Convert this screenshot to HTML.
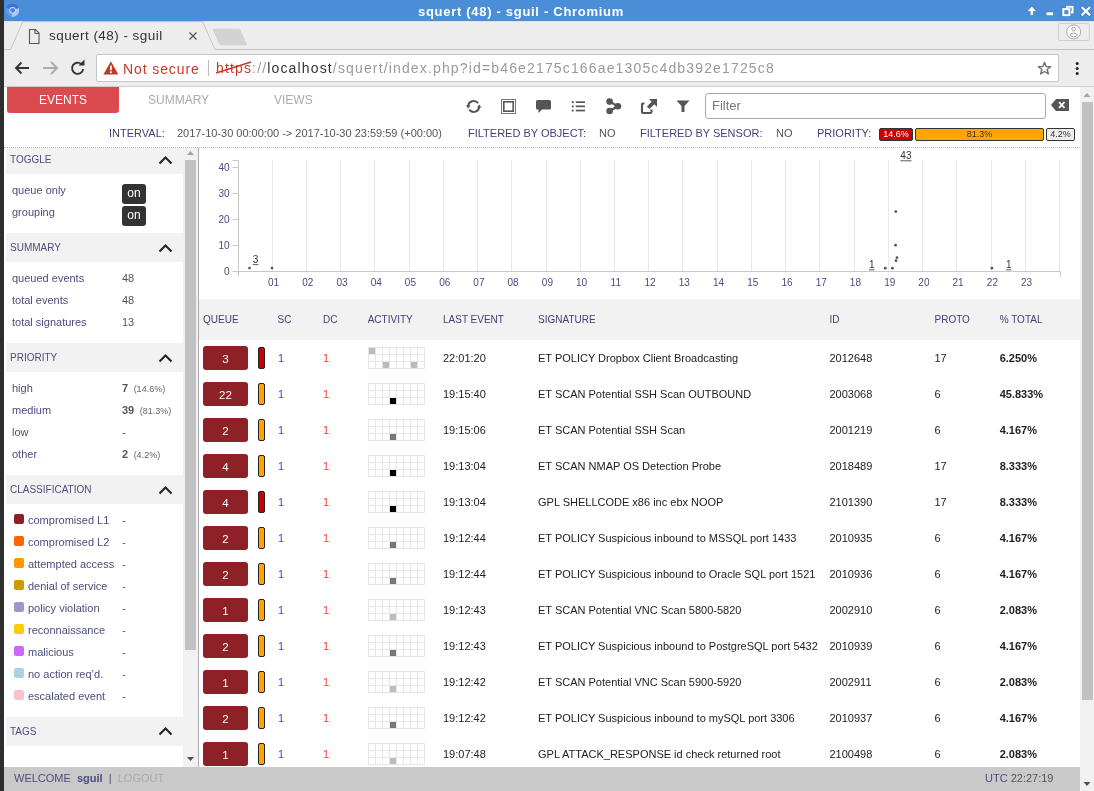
<!DOCTYPE html>
<html><head><meta charset="utf-8">
<style>
*{box-sizing:border-box;margin:0;padding:0}
html,body{width:1094px;height:791px;overflow:hidden;background:#fff;font-family:"Liberation Sans",sans-serif;position:relative}
.a{position:absolute;white-space:nowrap;-webkit-font-smoothing:antialiased}
#lb{left:0;top:0;width:4px;height:791px;background:#2e2e2e}
#title{left:4px;top:0;width:1090px;height:21px;background:#4a8ed8}
#tabs{left:4px;top:21px;width:1090px;height:29px;background:#ededed;border-top:1px solid #d9e3ee}
#toolbar{left:4px;top:50px;width:1090px;height:36px;background:#ededed}
#omni{left:96px;top:54px;width:963px;height:28px;background:#fff;border:1px solid #c6c6c6;border-radius:2px}
#page{left:4px;top:87px;width:1076px;height:704px;background:#fff}
.nav{font-size:12px;color:#aaa}
.lbl{font-size:11px;color:#414179}
.val{font-size:11px;color:#555}
.hdr{background:#f2f2f2;left:6px;width:177px}
.hdr .ht{left:4px;top:0;font-size:11px;color:#414179}
.side{font-size:11px;color:#4d4d7e}
.sval{font-size:11px;color:#555}
.th{font-size:11px;color:#414179}
.td{font-size:11px;color:#222}
.badge{width:45px;height:24px;background:#8e2027;border-radius:3px;color:#fff;font-size:11.5px;text-align:center;line-height:26px}
.pbar{width:6.5px;height:22px;border:1px solid #222;border-radius:2px}
body{filter:grayscale(0.0001)}</style></head><body>
<div id="lb" class="a"></div>
<div id="title" class="a">
  <svg class="a" style="left:0;top:0" width="18" height="21" viewBox="0 0 18 21">
    <path d="M8.6 10.3 L2.4 8.04 A6.6 6.6 0 0 1 14.8 8.04Z" fill="#3e6fd9"/>
    <path d="M8.6 10.3 L14.8 8.04 A6.6 6.6 0 0 1 7.45 16.8Z" fill="#aac8f6"/>
    <path d="M8.6 10.3 L7.45 16.8 A6.6 6.6 0 0 1 2.4 8.04Z" fill="#6498ee"/>
    <circle cx="8.6" cy="10.3" r="3.4" fill="#c6daf7"/>
    <circle cx="8.6" cy="10.3" r="2.4" fill="#4a86ec"/>
  </svg>
  <div class="a" style="left:414px;top:4px;color:#fff;font-weight:bold;font-size:13px;letter-spacing:0.7px">squert (48) - sguil - Chromium</div>
  <svg class="a" style="left:1021px;top:4px" width="69" height="14" viewBox="0 0 69 14">
    <g stroke="#2d5f9e" stroke-opacity="0.55" stroke-width="1" fill="none">
    <path d="M2.4 7.3 L6.8 2.4 L11.2 7.3 L8.1 7.3 V11.3 H5.5 V7.3Z"/>
    <rect x="21.4" y="8.3" width="6.8" height="3"/>
    <rect x="37.3" y="4.1" width="8.1" height="8.1"/>
    <path d="M40.5 3.5 V1.7 H48.6 V9.3 H46"/>
    <path d="M56 2.4 L65.7 12 M65.7 2.4 L56 12" stroke-width="3.4"/>
    </g>
    <path d="M2.4 7.3 L6.8 2.4 L11.2 7.3 L8.1 7.3 V11.3 H5.5 V7.3Z" fill="#fff"/>
    <rect x="21.4" y="8.3" width="6.8" height="3" fill="#fff"/>
    <path d="M41.8 3.8 V2.7 H47.6 V8.5 H45.8" stroke="#fff" stroke-width="2" fill="none"/>
    <rect x="38.3" y="5.1" width="6.1" height="6.1" stroke="#fff" stroke-width="2" fill="none"/>
    <path d="M56.6 3 L65.1 11.4 M65.1 3 L56.6 11.4" stroke="#fff" stroke-width="2.3"/>
  </svg>
</div>
<div id="tabs" class="a">
  <svg class="a" style="left:0;top:-1px" width="1090" height="30" viewBox="0 0 1090 30">
    <path d="M0 28.5 H6.5 L19 0.5 H198.5 L211 28.5 H1090" stroke="#c3c3c3" stroke-width="1" fill="none"/>
    <path d="M210.5 7.8 H234.5 Q235.8 7.8 236.4 9 L242.8 23 Q243.4 24.2 242 24.2 H217 Q215.8 24.2 215.2 23 L208.8 9 Q208.2 7.8 209.5 7.8Z" fill="#d3d3d3"/>
    <path d="M25.5 8.5 H31.5 L35 12 V22.5 H25.5Z" stroke="#555" stroke-width="1.1" fill="none"/>
    <path d="M31 8.5 V12.5 H35" stroke="#555" stroke-width="1.1" fill="none"/>
    <path d="M185.5 11.5 L192.5 18.5 M192.5 11.5 L185.5 18.5" stroke="#555" stroke-width="1.2"/>
  </svg>
  <div class="a" style="left:45px;top:6px;font-size:13.5px;color:#333;letter-spacing:0.45px">squert (48) - sguil</div>
  <div class="a" style="left:1054px;top:1px;width:32px;height:18px;border:1px solid #cfcfcf;border-radius:2px"></div>
  <svg class="a" style="left:1058px;top:0px" width="24" height="20" viewBox="0 0 24 20">
    <circle cx="11.7" cy="9.9" r="7" stroke="#aaa" stroke-width="1" fill="#fff"/>
    <rect x="10" y="5.3" width="3.4" height="3.6" rx="1.4" stroke="#999" stroke-width="0.9" fill="none"/>
    <ellipse cx="11.7" cy="13" rx="3.7" ry="1.8" stroke="#999" stroke-width="0.9" fill="none"/>
  </svg>
</div>
<div id="toolbar" class="a">
  <svg class="a" style="left:8px;top:9px" width="80" height="18" viewBox="0 0 80 18">
    <path d="M4 9 H17 M9.5 3.5 L4 9 L9.5 14.5" stroke="#333" stroke-width="1.9" fill="none"/>
    <path d="M31 9 H45 M39 3 L45 9 L39 15" stroke="#aaa" stroke-width="1.9" fill="none"/>
    <path d="M69.5 5.2 A5.6 5.6 0 1 0 71.2 10" stroke="#333" stroke-width="1.9" fill="none"/>
    <path d="M66.5 6.5 L72.5 6.5 L72.5 0.5 Z" fill="#333"/>
  </svg>
</div>
<div id="omni" class="a">
  <svg class="a" style="left:5.5px;top:6px" width="16" height="14" viewBox="0 0 16 14">
    <path d="M7.9 0.3 L15.4 13.5 H0.4Z" fill="#c5392a"/>
    <rect x="7" y="4.6" width="1.8" height="4.6" fill="#fff"/>
    <rect x="7" y="10.3" width="1.8" height="1.8" fill="#fff"/>
  </svg>
  <div class="a" style="left:26px;top:5.5px;font-size:14px;color:#c5392a;letter-spacing:0.9px">Not secure</div>
  <div class="a" style="left:111px;top:5px;width:1px;height:16px;background:#bbb"></div>
  <div class="a" style="left:119px;top:5px;font-size:14px;color:#999;letter-spacing:1.15px"><span style="color:#c5392a">https</span>://<span style="color:#333">localhost</span>/squert/index.php?id=b46e2175c166ae1305c4db392e1725c8</div>
  <svg class="a" style="left:119px;top:4px" width="40" height="18" viewBox="0 0 40 18">
    <path d="M0 14 L35 3" stroke="#c5392a" stroke-width="1.5"/>
  </svg>
  <svg class="a" style="left:939.5px;top:5.5px" width="15" height="15" viewBox="0 0 17 17">
    <path d="M8.5 1.5 L10.4 6.3 L15.5 6.5 L11.5 9.7 L12.9 14.7 L8.5 11.9 L4.1 14.7 L5.5 9.7 L1.5 6.5 L6.6 6.3Z" stroke="#707070" stroke-width="1.6" fill="none" stroke-linejoin="round"/>
  </svg>
</div>
<svg class="a" style="left:1074px;top:60px" width="6" height="18" viewBox="0 0 6 18">
  <circle cx="3.2" cy="3.6" r="1.5" fill="#222"/><circle cx="3.2" cy="8.6" r="1.5" fill="#222"/><circle cx="3.2" cy="13.6" r="1.5" fill="#222"/>
</svg>
<div id="page" class="a"></div><div class="a" style="left:4px;top:86px;width:1090px;height:1px;background:#cdcecd;z-index:7"></div>

<!-- top nav -->
<div class="a" style="left:7px;top:87px;width:112px;height:26px;background:#db4a4c;border-radius:0 0 3px 3px"></div>
<div class="a nav" style="left:39px;top:93px;color:#fff">EVENTS</div>
<div class="a nav" style="left:148px;top:93px">SUMMARY</div>
<div class="a nav" style="left:274px;top:93px">VIEWS</div>
<svg class="a" style="left:460px;top:95px" width="240" height="24" viewBox="0 0 240 24">
  <!-- refresh -->
  <g fill="none" stroke="#555" stroke-width="2" stroke-linecap="round">
    <path d="M17.6 7.6 A5.5 5.5 0 0 0 8.2 11"/><path d="M9.8 15.3 A5.5 5.5 0 0 0 19.2 12"/>
  </g>
  <path d="M5.9 10.6 H10.5 L8.2 13.6Z M16.9 12.4 H21.5 L19.2 9.4Z" fill="#555"/>
  <!-- frame -->
  <rect x="41.5" y="4.5" width="14" height="14" fill="none" stroke="#777" stroke-width="1"/>
  <rect x="43.8" y="6.8" width="9.4" height="9.4" fill="none" stroke="#555" stroke-width="1.6"/>
  <!-- comment -->
  <path d="M77.5 5 H89.5 Q91 5 91 6.5 V13 Q91 14.5 89.5 14.5 H82 L78.5 18 V14.5 H77.5 Q76 14.5 76 13 V6.5 Q76 5 77.5 5Z" fill="#555"/>
  <!-- list -->
  <g fill="#555"><rect x="111.8" y="6.2" width="1.9" height="1.9"/><rect x="111.8" y="10.4" width="1.9" height="1.9"/><rect x="111.8" y="14.6" width="1.9" height="1.9"/>
  <rect x="115.8" y="6.3" width="9.2" height="1.7"/><rect x="115.8" y="10.5" width="9.2" height="1.7"/><rect x="115.8" y="14.7" width="9.2" height="1.7"/></g>
  <!-- share -->
  <path d="M149.6 6.6 L157.9 11.3 L149.6 16" stroke="#555" stroke-width="2.2" fill="none"/>
  <g fill="#555"><circle cx="149.6" cy="6.6" r="3.3"/><circle cx="157.9" cy="11.3" r="3.3"/><circle cx="149.6" cy="16" r="3.3"/></g>
  <!-- external -->
  <path d="M184.5 8.5 H183 Q182 8.5 182 9.5 V17 Q182 18 183 18 H190.5 Q191.5 18 191.5 17 V14.5" fill="none" stroke="#555" stroke-width="2.1"/>
  <path d="M189 4 H197 V12 L194.3 9.3 L189.5 14.1 L186.9 11.5 L191.7 6.7Z" fill="#555"/>
  <!-- filter -->
  <path d="M216.5 5.5 H229.5 L224.5 11 V17 H221.5 V11Z" fill="#555"/>
</svg>
<div class="a" style="left:705px;top:93px;width:341px;height:26px;border:1px solid #aaa;border-radius:3px;background:#fff"></div>
<div class="a" style="left:712px;top:98px;font-size:13px;color:#777">Filter</div>
<svg class="a" style="left:1050px;top:98px" width="20" height="14" viewBox="0 0 20 14">
  <path d="M6 1 H19 V13 H6 L1 7Z" fill="#555"/>
  <path d="M9 4 L14.5 9.8 M14.5 4 L9 9.8" stroke="#fff" stroke-width="1.8"/>
</svg>
<!-- interval row -->
<div class="a lbl" style="left:109px;top:127px">INTERVAL:</div>
<div class="a val" style="left:177px;top:127px">2017-10-30 00:00:00 -&gt; 2017-10-30 23:59:59 (+00:00)</div>
<div class="a lbl" style="left:468px;top:127px">FILTERED BY OBJECT:</div>
<div class="a val" style="left:599px;top:127px">NO</div>
<div class="a lbl" style="left:640px;top:127px">FILTERED BY SENSOR:</div>
<div class="a val" style="left:776px;top:127px">NO</div>
<div class="a lbl" style="left:817px;top:127px">PRIORITY:</div>
<div class="a" style="left:879px;top:128px;width:34px;height:13px;background:#cc0000;border:1px solid #333;border-radius:2px;color:#fff;font-size:9px;text-align:center;line-height:10.5px">14.6%</div>
<div class="a" style="left:915px;top:128px;width:129px;height:13px;background:#ffa500;border:1px solid #333;border-radius:2px;color:#333;font-size:9px;text-align:center;line-height:10.5px">81.3%</div>
<div class="a" style="left:1046px;top:128px;width:29px;height:13px;background:#eee;border:1px solid #333;border-radius:2px;color:#333;font-size:9px;text-align:center;line-height:10.5px">4.2%</div>
<div class="a" style="left:4px;top:147px;width:1076px;height:1px;border-top:1px dotted #bbb"></div>
<div class="a" style="left:6px;top:148px;width:177px;height:26px;background:#f2f2f2"></div><div class="a side" style="left:10px;top:154px;font-size:10px">TOGGLE</div><svg class="a" style="left:158px;top:154.5px" width="15" height="10" viewBox="0 0 15 10"><path d="M1.5 8.5 L7.5 2.5 L13.5 8.5" stroke="#222" stroke-width="2" fill="none"/></svg><div class="a side" style="left:12px;top:184px">queue only</div><div class="a" style="left:122px;top:184px;width:24px;height:20px;background:#333;border-radius:3px;color:#fff;font-size:12px;text-align:center;line-height:19px">on</div><div class="a side" style="left:12px;top:206px">grouping</div><div class="a" style="left:122px;top:206px;width:24px;height:20px;background:#333;border-radius:3px;color:#fff;font-size:12px;text-align:center;line-height:19px">on</div><div class="a" style="left:6px;top:233px;width:177px;height:29px;background:#f2f2f2"></div><div class="a side" style="left:10px;top:242px;font-size:10px">SUMMARY</div><svg class="a" style="left:158px;top:242.5px" width="15" height="10" viewBox="0 0 15 10"><path d="M1.5 8.5 L7.5 2.5 L13.5 8.5" stroke="#222" stroke-width="2" fill="none"/></svg><div class="a side" style="left:12px;top:272px">queued events</div><div class="a sval" style="left:122px;top:272px">48</div><div class="a side" style="left:12px;top:294px">total events</div><div class="a sval" style="left:122px;top:294px">48</div><div class="a side" style="left:12px;top:316px">total signatures</div><div class="a sval" style="left:122px;top:316px">13</div><div class="a" style="left:6px;top:343px;width:177px;height:29px;background:#f2f2f2"></div><div class="a side" style="left:10px;top:352px;font-size:10px">PRIORITY</div><svg class="a" style="left:158px;top:352.5px" width="15" height="10" viewBox="0 0 15 10"><path d="M1.5 8.5 L7.5 2.5 L13.5 8.5" stroke="#222" stroke-width="2" fill="none"/></svg><div class="a side" style="left:12px;top:382px">high</div><div class="a sval" style="left:122px;top:382px"><b>7</b><span style="font-size:9px;color:#666;margin-left:5.5px">(14.6%)</span></div><div class="a side" style="left:12px;top:404px">medium</div><div class="a sval" style="left:122px;top:404px"><b>39</b><span style="font-size:9px;color:#666;margin-left:5.5px">(81.3%)</span></div><div class="a side" style="left:12px;top:426px">low</div><div class="a sval" style="left:122px;top:426px">-&nbsp;<span style="font-size:9px;color:#666"></span></div><div class="a side" style="left:12px;top:448px">other</div><div class="a sval" style="left:122px;top:448px"><b>2</b><span style="font-size:9px;color:#666;margin-left:5.5px">(4.2%)</span></div><div class="a" style="left:6px;top:475px;width:177px;height:29px;background:#f2f2f2"></div><div class="a side" style="left:10px;top:484px;font-size:10px">CLASSIFICATION</div><svg class="a" style="left:158px;top:484.5px" width="15" height="10" viewBox="0 0 15 10"><path d="M1.5 8.5 L7.5 2.5 L13.5 8.5" stroke="#222" stroke-width="2" fill="none"/></svg><div class="a" style="left:14px;top:514px;width:10px;height:10px;background:#8c2025;border-radius:2px"></div><div class="a side" style="left:28px;top:514px">compromised L1</div><div class="a sval" style="left:122px;top:514px">-</div><div class="a" style="left:14px;top:536px;width:10px;height:10px;background:#ff6600;border-radius:2px"></div><div class="a side" style="left:28px;top:536px">compromised L2</div><div class="a sval" style="left:122px;top:536px">-</div><div class="a" style="left:14px;top:558px;width:10px;height:10px;background:#ff9900;border-radius:2px"></div><div class="a side" style="left:28px;top:558px">attempted access</div><div class="a sval" style="left:122px;top:558px">-</div><div class="a" style="left:14px;top:580px;width:10px;height:10px;background:#cc9900;border-radius:2px"></div><div class="a side" style="left:28px;top:580px">denial of service</div><div class="a sval" style="left:122px;top:580px">-</div><div class="a" style="left:14px;top:602px;width:10px;height:10px;background:#9999cc;border-radius:2px"></div><div class="a side" style="left:28px;top:602px">policy violation</div><div class="a sval" style="left:122px;top:602px">-</div><div class="a" style="left:14px;top:624px;width:10px;height:10px;background:#ffcc00;border-radius:2px"></div><div class="a side" style="left:28px;top:624px">reconnaissance</div><div class="a sval" style="left:122px;top:624px">-</div><div class="a" style="left:14px;top:646px;width:10px;height:10px;background:#cc66ff;border-radius:2px"></div><div class="a side" style="left:28px;top:646px">malicious</div><div class="a sval" style="left:122px;top:646px">-</div><div class="a" style="left:14px;top:668px;width:10px;height:10px;background:#aad4e0;border-radius:2px"></div><div class="a side" style="left:28px;top:668px">no action req’d.</div><div class="a sval" style="left:122px;top:668px">-</div><div class="a" style="left:14px;top:690px;width:10px;height:10px;background:#ffc0cb;border-radius:2px"></div><div class="a side" style="left:28px;top:690px">escalated event</div><div class="a sval" style="left:122px;top:690px">-</div><div class="a" style="left:6px;top:717px;width:177px;height:29px;background:#f2f2f2"></div><div class="a side" style="left:10px;top:725.5px;font-size:10px">TAGS</div><svg class="a" style="left:158px;top:726.0px" width="15" height="10" viewBox="0 0 15 10"><path d="M1.5 8.5 L7.5 2.5 L13.5 8.5" stroke="#222" stroke-width="2" fill="none"/></svg><div class="a" style="left:183px;top:148px;width:15px;height:619px;background:#f1f1f1"></div><div class="a" style="left:185px;top:160px;width:11px;height:490px;background:#c1c1c1"></div><svg class="a" style="left:184px;top:148px" width="13" height="10" viewBox="0 0 13 10"><path d="M3 7 L6.5 3 L10 7Z" fill="#a3a3a3"/></svg><svg class="a" style="left:184px;top:754px" width="13" height="10" viewBox="0 0 13 10"><path d="M3 3 L6.5 7 L10 3Z" fill="#505050"/></svg><div class="a" style="left:198px;top:148px;width:1px;height:619px;background:#aaa"></div><div class="a" style="left:4px;top:767px;width:1076px;height:24px;background:#c9c9c9;z-index:5"></div><div class="a side" style="left:14px;top:772px;z-index:6">WELCOME&nbsp; <b>sguil</b>&nbsp; |&nbsp; <span style="color:#aaa">LOGOUT</span></div><div class="a side" style="left:985px;top:772px;z-index:6">UTC <span style="color:#555">22:27:19</span></div><div class="a" style="left:1080px;top:87px;width:14px;height:704px;background:#f1f1f1"></div><div class="a" style="left:1082px;top:102px;width:11px;height:598px;background:#c1c1c1"></div><svg class="a" style="left:1080px;top:89px" width="14" height="12" viewBox="0 0 14 12"><path d="M3.5 8 L7 4 L10.5 8Z" fill="#a3a3a3"/></svg><svg class="a" style="left:1080px;top:778px" width="14" height="12" viewBox="0 0 14 12"><path d="M3.5 4 L7 8 L10.5 4Z" fill="#505050"/></svg>
<svg class="a" style="left:199px;top:148px" width="881" height="150" viewBox="0 0 881 150">
<line x1="73.5" y1="12" x2="73.5" y2="123.2" stroke="#e8e8e8" stroke-width="1"/>
<line x1="107.5" y1="12" x2="107.5" y2="123.2" stroke="#e8e8e8" stroke-width="1"/>
<line x1="141.5" y1="12" x2="141.5" y2="123.2" stroke="#e8e8e8" stroke-width="1"/>
<line x1="175.5" y1="12" x2="175.5" y2="123.2" stroke="#e8e8e8" stroke-width="1"/>
<line x1="210.5" y1="12" x2="210.5" y2="123.2" stroke="#e8e8e8" stroke-width="1"/>
<line x1="244.5" y1="12" x2="244.5" y2="123.2" stroke="#e8e8e8" stroke-width="1"/>
<line x1="278.5" y1="12" x2="278.5" y2="123.2" stroke="#e8e8e8" stroke-width="1"/>
<line x1="312.5" y1="12" x2="312.5" y2="123.2" stroke="#e8e8e8" stroke-width="1"/>
<line x1="347.5" y1="12" x2="347.5" y2="123.2" stroke="#e8e8e8" stroke-width="1"/>
<line x1="381.5" y1="12" x2="381.5" y2="123.2" stroke="#e8e8e8" stroke-width="1"/>
<line x1="415.5" y1="12" x2="415.5" y2="123.2" stroke="#e8e8e8" stroke-width="1"/>
<line x1="449.5" y1="12" x2="449.5" y2="123.2" stroke="#e8e8e8" stroke-width="1"/>
<line x1="483.5" y1="12" x2="483.5" y2="123.2" stroke="#e8e8e8" stroke-width="1"/>
<line x1="518.5" y1="12" x2="518.5" y2="123.2" stroke="#e8e8e8" stroke-width="1"/>
<line x1="552.5" y1="12" x2="552.5" y2="123.2" stroke="#e8e8e8" stroke-width="1"/>
<line x1="586.5" y1="12" x2="586.5" y2="123.2" stroke="#e8e8e8" stroke-width="1"/>
<line x1="620.5" y1="12" x2="620.5" y2="123.2" stroke="#e8e8e8" stroke-width="1"/>
<line x1="655.5" y1="12" x2="655.5" y2="123.2" stroke="#e8e8e8" stroke-width="1"/>
<line x1="689.5" y1="12" x2="689.5" y2="123.2" stroke="#e8e8e8" stroke-width="1"/>
<line x1="723.5" y1="12" x2="723.5" y2="123.2" stroke="#e8e8e8" stroke-width="1"/>
<line x1="757.5" y1="12" x2="757.5" y2="123.2" stroke="#e8e8e8" stroke-width="1"/>
<line x1="792.5" y1="12" x2="792.5" y2="123.2" stroke="#e8e8e8" stroke-width="1"/>
<line x1="826.5" y1="12" x2="826.5" y2="123.2" stroke="#e8e8e8" stroke-width="1"/>
<line x1="860.5" y1="12" x2="860.5" y2="123.2" stroke="#e8e8e8" stroke-width="1"/>
<path d="M33.5 12.5 H39.5 V128.7" stroke="#c8c8c8" fill="none" stroke-width="1"/>
<path d="M33.5 123.5 H861.5 V128.7" stroke="#c8c8c8" fill="none" stroke-width="1"/>
<line x1="33.5" y1="97.5" x2="39.5" y2="97.5" stroke="#c8c8c8" stroke-width="1"/>
<line x1="33.5" y1="71.5" x2="39.5" y2="71.5" stroke="#c8c8c8" stroke-width="1"/>
<line x1="33.5" y1="45.5" x2="39.5" y2="45.5" stroke="#c8c8c8" stroke-width="1"/>
<line x1="33.5" y1="19.5" x2="39.5" y2="19.5" stroke="#c8c8c8" stroke-width="1"/>
<text x="30.5" y="126.8" text-anchor="end" font-size="10" fill="#4a4a7c" font-family="Liberation Sans">0</text>
<text x="30.5" y="100.8" text-anchor="end" font-size="10" fill="#4a4a7c" font-family="Liberation Sans">10</text>
<text x="30.5" y="74.9" text-anchor="end" font-size="10" fill="#4a4a7c" font-family="Liberation Sans">20</text>
<text x="30.5" y="48.9" text-anchor="end" font-size="10" fill="#4a4a7c" font-family="Liberation Sans">30</text>
<text x="30.5" y="23.0" text-anchor="end" font-size="10" fill="#4a4a7c" font-family="Liberation Sans">40</text>
<text x="74.5" y="137.60000000000002" text-anchor="middle" font-size="10" fill="#4a4a7c" font-family="Liberation Sans">01</text>
<text x="108.8" y="137.60000000000002" text-anchor="middle" font-size="10" fill="#4a4a7c" font-family="Liberation Sans">02</text>
<text x="143.0" y="137.60000000000002" text-anchor="middle" font-size="10" fill="#4a4a7c" font-family="Liberation Sans">03</text>
<text x="177.2" y="137.60000000000002" text-anchor="middle" font-size="10" fill="#4a4a7c" font-family="Liberation Sans">04</text>
<text x="211.4" y="137.60000000000002" text-anchor="middle" font-size="10" fill="#4a4a7c" font-family="Liberation Sans">05</text>
<text x="245.7" y="137.60000000000002" text-anchor="middle" font-size="10" fill="#4a4a7c" font-family="Liberation Sans">06</text>
<text x="279.9" y="137.60000000000002" text-anchor="middle" font-size="10" fill="#4a4a7c" font-family="Liberation Sans">07</text>
<text x="314.1" y="137.60000000000002" text-anchor="middle" font-size="10" fill="#4a4a7c" font-family="Liberation Sans">08</text>
<text x="348.4" y="137.60000000000002" text-anchor="middle" font-size="10" fill="#4a4a7c" font-family="Liberation Sans">09</text>
<text x="382.6" y="137.60000000000002" text-anchor="middle" font-size="10" fill="#4a4a7c" font-family="Liberation Sans">10</text>
<text x="416.8" y="137.60000000000002" text-anchor="middle" font-size="10" fill="#4a4a7c" font-family="Liberation Sans">11</text>
<text x="451.1" y="137.60000000000002" text-anchor="middle" font-size="10" fill="#4a4a7c" font-family="Liberation Sans">12</text>
<text x="485.3" y="137.60000000000002" text-anchor="middle" font-size="10" fill="#4a4a7c" font-family="Liberation Sans">13</text>
<text x="519.5" y="137.60000000000002" text-anchor="middle" font-size="10" fill="#4a4a7c" font-family="Liberation Sans">14</text>
<text x="553.7" y="137.60000000000002" text-anchor="middle" font-size="10" fill="#4a4a7c" font-family="Liberation Sans">15</text>
<text x="588.0" y="137.60000000000002" text-anchor="middle" font-size="10" fill="#4a4a7c" font-family="Liberation Sans">16</text>
<text x="622.2" y="137.60000000000002" text-anchor="middle" font-size="10" fill="#4a4a7c" font-family="Liberation Sans">17</text>
<text x="656.4" y="137.60000000000002" text-anchor="middle" font-size="10" fill="#4a4a7c" font-family="Liberation Sans">18</text>
<text x="690.7" y="137.60000000000002" text-anchor="middle" font-size="10" fill="#4a4a7c" font-family="Liberation Sans">19</text>
<text x="724.9" y="137.60000000000002" text-anchor="middle" font-size="10" fill="#4a4a7c" font-family="Liberation Sans">20</text>
<text x="759.1" y="137.60000000000002" text-anchor="middle" font-size="10" fill="#4a4a7c" font-family="Liberation Sans">21</text>
<text x="793.4" y="137.60000000000002" text-anchor="middle" font-size="10" fill="#4a4a7c" font-family="Liberation Sans">22</text>
<text x="827.6" y="137.60000000000002" text-anchor="middle" font-size="10" fill="#4a4a7c" font-family="Liberation Sans">23</text>
<circle cx="50.5" cy="120.10000000000002" r="1.4" fill="#555"/>
<circle cx="73" cy="120.10000000000002" r="1.4" fill="#555"/>
<circle cx="686.3" cy="120.19999999999999" r="1.4" fill="#555"/>
<circle cx="693.4" cy="120.19999999999999" r="1.4" fill="#555"/>
<circle cx="696.8" cy="63.599999999999994" r="1.4" fill="#555"/>
<circle cx="696.5" cy="97.19999999999999" r="1.4" fill="#555"/>
<circle cx="698" cy="109.60000000000002" r="1.4" fill="#555"/>
<circle cx="697" cy="112.69999999999999" r="1.4" fill="#555"/>
<circle cx="792.9" cy="120.19999999999999" r="1.4" fill="#555"/>
<text x="56.599999999999994" y="115.1" text-anchor="middle" font-size="10" fill="#333" font-family="Liberation Sans">3</text>
<line x1="53.8" y1="116.6" x2="59.4" y2="116.6" stroke="#333" stroke-width="0.8"/>
<text x="672.8" y="120.3" text-anchor="middle" font-size="10" fill="#333" font-family="Liberation Sans">1</text>
<line x1="670.0" y1="121.8" x2="675.6" y2="121.8" stroke="#333" stroke-width="0.8"/>
<text x="706.9" y="11.3" text-anchor="middle" font-size="10" fill="#333" font-family="Liberation Sans">43</text>
<line x1="701.3" y1="12.8" x2="712.5" y2="12.8" stroke="#333" stroke-width="0.8"/>
<text x="809.7" y="120.3" text-anchor="middle" font-size="10" fill="#333" font-family="Liberation Sans">1</text>
<line x1="806.9" y1="121.8" x2="812.5" y2="121.8" stroke="#333" stroke-width="0.8"/>
</svg><div class="a" style="left:199px;top:299px;width:881px;height:41px;background:#f2f2f2"></div><div class="a th" style="left:203px;top:314px;font-size:10px">QUEUE</div><div class="a th" style="left:277.5px;top:314px;font-size:10px">SC</div><div class="a th" style="left:323px;top:314px;font-size:10px">DC</div><div class="a th" style="left:367.7px;top:314px;font-size:10px">ACTIVITY</div><div class="a th" style="left:443px;top:314px;font-size:10px">LAST EVENT</div><div class="a th" style="left:538px;top:314px;font-size:10px">SIGNATURE</div><div class="a th" style="left:829.5px;top:314px;font-size:10px">ID</div><div class="a th" style="left:934.5px;top:314px;font-size:10px">PROTO</div><div class="a th" style="left:999.7px;top:314px;font-size:10px">% TOTAL</div><div class="a badge" style="left:203px;top:346px">3</div><div class="a pbar" style="left:258px;top:347px;background:#cc0000"></div><div class="a td" style="left:278px;top:352px;color:#3c3cff">1</div><div class="a td" style="left:323px;top:352px;color:#ff3c3c">1</div><div class="a" style="left:368px;top:347px;width:57px;height:22px;background:#e6e6e6"><div class="a" style="left:1px;top:1px;width:6px;height:6px;background:#bbb"></div><div class="a" style="left:8px;top:1px;width:6px;height:6px;background:#fff"></div><div class="a" style="left:15px;top:1px;width:6px;height:6px;background:#fff"></div><div class="a" style="left:22px;top:1px;width:6px;height:6px;background:#fff"></div><div class="a" style="left:29px;top:1px;width:6px;height:6px;background:#fff"></div><div class="a" style="left:36px;top:1px;width:6px;height:6px;background:#fff"></div><div class="a" style="left:43px;top:1px;width:6px;height:6px;background:#fff"></div><div class="a" style="left:50px;top:1px;width:6px;height:6px;background:#fff"></div><div class="a" style="left:1px;top:8px;width:6px;height:6px;background:#fff"></div><div class="a" style="left:8px;top:8px;width:6px;height:6px;background:#fff"></div><div class="a" style="left:15px;top:8px;width:6px;height:6px;background:#fff"></div><div class="a" style="left:22px;top:8px;width:6px;height:6px;background:#fff"></div><div class="a" style="left:29px;top:8px;width:6px;height:6px;background:#fff"></div><div class="a" style="left:36px;top:8px;width:6px;height:6px;background:#fff"></div><div class="a" style="left:43px;top:8px;width:6px;height:6px;background:#fff"></div><div class="a" style="left:50px;top:8px;width:6px;height:6px;background:#fff"></div><div class="a" style="left:1px;top:15px;width:6px;height:6px;background:#fff"></div><div class="a" style="left:8px;top:15px;width:6px;height:6px;background:#fff"></div><div class="a" style="left:15px;top:15px;width:6px;height:6px;background:#bbb"></div><div class="a" style="left:22px;top:15px;width:6px;height:6px;background:#fff"></div><div class="a" style="left:29px;top:15px;width:6px;height:6px;background:#fff"></div><div class="a" style="left:36px;top:15px;width:6px;height:6px;background:#fff"></div><div class="a" style="left:43px;top:15px;width:6px;height:6px;background:#bbb"></div><div class="a" style="left:50px;top:15px;width:6px;height:6px;background:#fff"></div></div><div class="a td" style="left:443px;top:352px">22:01:20</div><div class="a td" style="left:538px;top:352px">ET POLICY Dropbox Client Broadcasting</div><div class="a td" style="left:829.5px;top:352px">2012648</div><div class="a td" style="left:934.5px;top:352px">17</div><div class="a td" style="left:999.7px;top:352px;font-weight:bold">6.250%</div><div class="a badge" style="left:203px;top:382px">22</div><div class="a pbar" style="left:258px;top:383px;background:#ffa500"></div><div class="a td" style="left:278px;top:388px;color:#3c3cff">1</div><div class="a td" style="left:323px;top:388px;color:#ff3c3c">1</div><div class="a" style="left:368px;top:383px;width:57px;height:22px;background:#e6e6e6"><div class="a" style="left:1px;top:1px;width:6px;height:6px;background:#fff"></div><div class="a" style="left:8px;top:1px;width:6px;height:6px;background:#fff"></div><div class="a" style="left:15px;top:1px;width:6px;height:6px;background:#fff"></div><div class="a" style="left:22px;top:1px;width:6px;height:6px;background:#fff"></div><div class="a" style="left:29px;top:1px;width:6px;height:6px;background:#fff"></div><div class="a" style="left:36px;top:1px;width:6px;height:6px;background:#fff"></div><div class="a" style="left:43px;top:1px;width:6px;height:6px;background:#fff"></div><div class="a" style="left:50px;top:1px;width:6px;height:6px;background:#fff"></div><div class="a" style="left:1px;top:8px;width:6px;height:6px;background:#fff"></div><div class="a" style="left:8px;top:8px;width:6px;height:6px;background:#fff"></div><div class="a" style="left:15px;top:8px;width:6px;height:6px;background:#fff"></div><div class="a" style="left:22px;top:8px;width:6px;height:6px;background:#fff"></div><div class="a" style="left:29px;top:8px;width:6px;height:6px;background:#fff"></div><div class="a" style="left:36px;top:8px;width:6px;height:6px;background:#fff"></div><div class="a" style="left:43px;top:8px;width:6px;height:6px;background:#fff"></div><div class="a" style="left:50px;top:8px;width:6px;height:6px;background:#fff"></div><div class="a" style="left:1px;top:15px;width:6px;height:6px;background:#fff"></div><div class="a" style="left:8px;top:15px;width:6px;height:6px;background:#fff"></div><div class="a" style="left:15px;top:15px;width:6px;height:6px;background:#fff"></div><div class="a" style="left:22px;top:15px;width:6px;height:6px;background:#000"></div><div class="a" style="left:29px;top:15px;width:6px;height:6px;background:#fff"></div><div class="a" style="left:36px;top:15px;width:6px;height:6px;background:#fff"></div><div class="a" style="left:43px;top:15px;width:6px;height:6px;background:#fff"></div><div class="a" style="left:50px;top:15px;width:6px;height:6px;background:#fff"></div></div><div class="a td" style="left:443px;top:388px">19:15:40</div><div class="a td" style="left:538px;top:388px">ET SCAN Potential SSH Scan OUTBOUND</div><div class="a td" style="left:829.5px;top:388px">2003068</div><div class="a td" style="left:934.5px;top:388px">6</div><div class="a td" style="left:999.7px;top:388px;font-weight:bold">45.833%</div><div class="a badge" style="left:203px;top:418px">2</div><div class="a pbar" style="left:258px;top:419px;background:#ffa500"></div><div class="a td" style="left:278px;top:424px;color:#3c3cff">1</div><div class="a td" style="left:323px;top:424px;color:#ff3c3c">1</div><div class="a" style="left:368px;top:419px;width:57px;height:22px;background:#e6e6e6"><div class="a" style="left:1px;top:1px;width:6px;height:6px;background:#fff"></div><div class="a" style="left:8px;top:1px;width:6px;height:6px;background:#fff"></div><div class="a" style="left:15px;top:1px;width:6px;height:6px;background:#fff"></div><div class="a" style="left:22px;top:1px;width:6px;height:6px;background:#fff"></div><div class="a" style="left:29px;top:1px;width:6px;height:6px;background:#fff"></div><div class="a" style="left:36px;top:1px;width:6px;height:6px;background:#fff"></div><div class="a" style="left:43px;top:1px;width:6px;height:6px;background:#fff"></div><div class="a" style="left:50px;top:1px;width:6px;height:6px;background:#fff"></div><div class="a" style="left:1px;top:8px;width:6px;height:6px;background:#fff"></div><div class="a" style="left:8px;top:8px;width:6px;height:6px;background:#fff"></div><div class="a" style="left:15px;top:8px;width:6px;height:6px;background:#fff"></div><div class="a" style="left:22px;top:8px;width:6px;height:6px;background:#fff"></div><div class="a" style="left:29px;top:8px;width:6px;height:6px;background:#fff"></div><div class="a" style="left:36px;top:8px;width:6px;height:6px;background:#fff"></div><div class="a" style="left:43px;top:8px;width:6px;height:6px;background:#fff"></div><div class="a" style="left:50px;top:8px;width:6px;height:6px;background:#fff"></div><div class="a" style="left:1px;top:15px;width:6px;height:6px;background:#fff"></div><div class="a" style="left:8px;top:15px;width:6px;height:6px;background:#fff"></div><div class="a" style="left:15px;top:15px;width:6px;height:6px;background:#fff"></div><div class="a" style="left:22px;top:15px;width:6px;height:6px;background:#777"></div><div class="a" style="left:29px;top:15px;width:6px;height:6px;background:#fff"></div><div class="a" style="left:36px;top:15px;width:6px;height:6px;background:#fff"></div><div class="a" style="left:43px;top:15px;width:6px;height:6px;background:#fff"></div><div class="a" style="left:50px;top:15px;width:6px;height:6px;background:#fff"></div></div><div class="a td" style="left:443px;top:424px">19:15:06</div><div class="a td" style="left:538px;top:424px">ET SCAN Potential SSH Scan</div><div class="a td" style="left:829.5px;top:424px">2001219</div><div class="a td" style="left:934.5px;top:424px">6</div><div class="a td" style="left:999.7px;top:424px;font-weight:bold">4.167%</div><div class="a badge" style="left:203px;top:454px">4</div><div class="a pbar" style="left:258px;top:455px;background:#ffa500"></div><div class="a td" style="left:278px;top:460px;color:#3c3cff">1</div><div class="a td" style="left:323px;top:460px;color:#ff3c3c">1</div><div class="a" style="left:368px;top:455px;width:57px;height:22px;background:#e6e6e6"><div class="a" style="left:1px;top:1px;width:6px;height:6px;background:#fff"></div><div class="a" style="left:8px;top:1px;width:6px;height:6px;background:#fff"></div><div class="a" style="left:15px;top:1px;width:6px;height:6px;background:#fff"></div><div class="a" style="left:22px;top:1px;width:6px;height:6px;background:#fff"></div><div class="a" style="left:29px;top:1px;width:6px;height:6px;background:#fff"></div><div class="a" style="left:36px;top:1px;width:6px;height:6px;background:#fff"></div><div class="a" style="left:43px;top:1px;width:6px;height:6px;background:#fff"></div><div class="a" style="left:50px;top:1px;width:6px;height:6px;background:#fff"></div><div class="a" style="left:1px;top:8px;width:6px;height:6px;background:#fff"></div><div class="a" style="left:8px;top:8px;width:6px;height:6px;background:#fff"></div><div class="a" style="left:15px;top:8px;width:6px;height:6px;background:#fff"></div><div class="a" style="left:22px;top:8px;width:6px;height:6px;background:#fff"></div><div class="a" style="left:29px;top:8px;width:6px;height:6px;background:#fff"></div><div class="a" style="left:36px;top:8px;width:6px;height:6px;background:#fff"></div><div class="a" style="left:43px;top:8px;width:6px;height:6px;background:#fff"></div><div class="a" style="left:50px;top:8px;width:6px;height:6px;background:#fff"></div><div class="a" style="left:1px;top:15px;width:6px;height:6px;background:#fff"></div><div class="a" style="left:8px;top:15px;width:6px;height:6px;background:#fff"></div><div class="a" style="left:15px;top:15px;width:6px;height:6px;background:#fff"></div><div class="a" style="left:22px;top:15px;width:6px;height:6px;background:#000"></div><div class="a" style="left:29px;top:15px;width:6px;height:6px;background:#fff"></div><div class="a" style="left:36px;top:15px;width:6px;height:6px;background:#fff"></div><div class="a" style="left:43px;top:15px;width:6px;height:6px;background:#fff"></div><div class="a" style="left:50px;top:15px;width:6px;height:6px;background:#fff"></div></div><div class="a td" style="left:443px;top:460px">19:13:04</div><div class="a td" style="left:538px;top:460px">ET SCAN NMAP OS Detection Probe</div><div class="a td" style="left:829.5px;top:460px">2018489</div><div class="a td" style="left:934.5px;top:460px">17</div><div class="a td" style="left:999.7px;top:460px;font-weight:bold">8.333%</div><div class="a badge" style="left:203px;top:490px">4</div><div class="a pbar" style="left:258px;top:491px;background:#cc0000"></div><div class="a td" style="left:278px;top:496px;color:#3c3cff">1</div><div class="a td" style="left:323px;top:496px;color:#ff3c3c">1</div><div class="a" style="left:368px;top:491px;width:57px;height:22px;background:#e6e6e6"><div class="a" style="left:1px;top:1px;width:6px;height:6px;background:#fff"></div><div class="a" style="left:8px;top:1px;width:6px;height:6px;background:#fff"></div><div class="a" style="left:15px;top:1px;width:6px;height:6px;background:#fff"></div><div class="a" style="left:22px;top:1px;width:6px;height:6px;background:#fff"></div><div class="a" style="left:29px;top:1px;width:6px;height:6px;background:#fff"></div><div class="a" style="left:36px;top:1px;width:6px;height:6px;background:#fff"></div><div class="a" style="left:43px;top:1px;width:6px;height:6px;background:#fff"></div><div class="a" style="left:50px;top:1px;width:6px;height:6px;background:#fff"></div><div class="a" style="left:1px;top:8px;width:6px;height:6px;background:#fff"></div><div class="a" style="left:8px;top:8px;width:6px;height:6px;background:#fff"></div><div class="a" style="left:15px;top:8px;width:6px;height:6px;background:#fff"></div><div class="a" style="left:22px;top:8px;width:6px;height:6px;background:#fff"></div><div class="a" style="left:29px;top:8px;width:6px;height:6px;background:#fff"></div><div class="a" style="left:36px;top:8px;width:6px;height:6px;background:#fff"></div><div class="a" style="left:43px;top:8px;width:6px;height:6px;background:#fff"></div><div class="a" style="left:50px;top:8px;width:6px;height:6px;background:#fff"></div><div class="a" style="left:1px;top:15px;width:6px;height:6px;background:#fff"></div><div class="a" style="left:8px;top:15px;width:6px;height:6px;background:#fff"></div><div class="a" style="left:15px;top:15px;width:6px;height:6px;background:#fff"></div><div class="a" style="left:22px;top:15px;width:6px;height:6px;background:#000"></div><div class="a" style="left:29px;top:15px;width:6px;height:6px;background:#fff"></div><div class="a" style="left:36px;top:15px;width:6px;height:6px;background:#fff"></div><div class="a" style="left:43px;top:15px;width:6px;height:6px;background:#fff"></div><div class="a" style="left:50px;top:15px;width:6px;height:6px;background:#fff"></div></div><div class="a td" style="left:443px;top:496px">19:13:04</div><div class="a td" style="left:538px;top:496px">GPL SHELLCODE x86 inc ebx NOOP</div><div class="a td" style="left:829.5px;top:496px">2101390</div><div class="a td" style="left:934.5px;top:496px">17</div><div class="a td" style="left:999.7px;top:496px;font-weight:bold">8.333%</div><div class="a badge" style="left:203px;top:526px">2</div><div class="a pbar" style="left:258px;top:527px;background:#ffa500"></div><div class="a td" style="left:278px;top:532px;color:#3c3cff">1</div><div class="a td" style="left:323px;top:532px;color:#ff3c3c">1</div><div class="a" style="left:368px;top:527px;width:57px;height:22px;background:#e6e6e6"><div class="a" style="left:1px;top:1px;width:6px;height:6px;background:#fff"></div><div class="a" style="left:8px;top:1px;width:6px;height:6px;background:#fff"></div><div class="a" style="left:15px;top:1px;width:6px;height:6px;background:#fff"></div><div class="a" style="left:22px;top:1px;width:6px;height:6px;background:#fff"></div><div class="a" style="left:29px;top:1px;width:6px;height:6px;background:#fff"></div><div class="a" style="left:36px;top:1px;width:6px;height:6px;background:#fff"></div><div class="a" style="left:43px;top:1px;width:6px;height:6px;background:#fff"></div><div class="a" style="left:50px;top:1px;width:6px;height:6px;background:#fff"></div><div class="a" style="left:1px;top:8px;width:6px;height:6px;background:#fff"></div><div class="a" style="left:8px;top:8px;width:6px;height:6px;background:#fff"></div><div class="a" style="left:15px;top:8px;width:6px;height:6px;background:#fff"></div><div class="a" style="left:22px;top:8px;width:6px;height:6px;background:#fff"></div><div class="a" style="left:29px;top:8px;width:6px;height:6px;background:#fff"></div><div class="a" style="left:36px;top:8px;width:6px;height:6px;background:#fff"></div><div class="a" style="left:43px;top:8px;width:6px;height:6px;background:#fff"></div><div class="a" style="left:50px;top:8px;width:6px;height:6px;background:#fff"></div><div class="a" style="left:1px;top:15px;width:6px;height:6px;background:#fff"></div><div class="a" style="left:8px;top:15px;width:6px;height:6px;background:#fff"></div><div class="a" style="left:15px;top:15px;width:6px;height:6px;background:#fff"></div><div class="a" style="left:22px;top:15px;width:6px;height:6px;background:#777"></div><div class="a" style="left:29px;top:15px;width:6px;height:6px;background:#fff"></div><div class="a" style="left:36px;top:15px;width:6px;height:6px;background:#fff"></div><div class="a" style="left:43px;top:15px;width:6px;height:6px;background:#fff"></div><div class="a" style="left:50px;top:15px;width:6px;height:6px;background:#fff"></div></div><div class="a td" style="left:443px;top:532px">19:12:44</div><div class="a td" style="left:538px;top:532px">ET POLICY Suspicious inbound to MSSQL port 1433</div><div class="a td" style="left:829.5px;top:532px">2010935</div><div class="a td" style="left:934.5px;top:532px">6</div><div class="a td" style="left:999.7px;top:532px;font-weight:bold">4.167%</div><div class="a badge" style="left:203px;top:562px">2</div><div class="a pbar" style="left:258px;top:563px;background:#ffa500"></div><div class="a td" style="left:278px;top:568px;color:#3c3cff">1</div><div class="a td" style="left:323px;top:568px;color:#ff3c3c">1</div><div class="a" style="left:368px;top:563px;width:57px;height:22px;background:#e6e6e6"><div class="a" style="left:1px;top:1px;width:6px;height:6px;background:#fff"></div><div class="a" style="left:8px;top:1px;width:6px;height:6px;background:#fff"></div><div class="a" style="left:15px;top:1px;width:6px;height:6px;background:#fff"></div><div class="a" style="left:22px;top:1px;width:6px;height:6px;background:#fff"></div><div class="a" style="left:29px;top:1px;width:6px;height:6px;background:#fff"></div><div class="a" style="left:36px;top:1px;width:6px;height:6px;background:#fff"></div><div class="a" style="left:43px;top:1px;width:6px;height:6px;background:#fff"></div><div class="a" style="left:50px;top:1px;width:6px;height:6px;background:#fff"></div><div class="a" style="left:1px;top:8px;width:6px;height:6px;background:#fff"></div><div class="a" style="left:8px;top:8px;width:6px;height:6px;background:#fff"></div><div class="a" style="left:15px;top:8px;width:6px;height:6px;background:#fff"></div><div class="a" style="left:22px;top:8px;width:6px;height:6px;background:#fff"></div><div class="a" style="left:29px;top:8px;width:6px;height:6px;background:#fff"></div><div class="a" style="left:36px;top:8px;width:6px;height:6px;background:#fff"></div><div class="a" style="left:43px;top:8px;width:6px;height:6px;background:#fff"></div><div class="a" style="left:50px;top:8px;width:6px;height:6px;background:#fff"></div><div class="a" style="left:1px;top:15px;width:6px;height:6px;background:#fff"></div><div class="a" style="left:8px;top:15px;width:6px;height:6px;background:#fff"></div><div class="a" style="left:15px;top:15px;width:6px;height:6px;background:#fff"></div><div class="a" style="left:22px;top:15px;width:6px;height:6px;background:#777"></div><div class="a" style="left:29px;top:15px;width:6px;height:6px;background:#fff"></div><div class="a" style="left:36px;top:15px;width:6px;height:6px;background:#fff"></div><div class="a" style="left:43px;top:15px;width:6px;height:6px;background:#fff"></div><div class="a" style="left:50px;top:15px;width:6px;height:6px;background:#fff"></div></div><div class="a td" style="left:443px;top:568px">19:12:44</div><div class="a td" style="left:538px;top:568px">ET POLICY Suspicious inbound to Oracle SQL port 1521</div><div class="a td" style="left:829.5px;top:568px">2010936</div><div class="a td" style="left:934.5px;top:568px">6</div><div class="a td" style="left:999.7px;top:568px;font-weight:bold">4.167%</div><div class="a badge" style="left:203px;top:598px">1</div><div class="a pbar" style="left:258px;top:599px;background:#ffa500"></div><div class="a td" style="left:278px;top:604px;color:#3c3cff">1</div><div class="a td" style="left:323px;top:604px;color:#ff3c3c">1</div><div class="a" style="left:368px;top:599px;width:57px;height:22px;background:#e6e6e6"><div class="a" style="left:1px;top:1px;width:6px;height:6px;background:#fff"></div><div class="a" style="left:8px;top:1px;width:6px;height:6px;background:#fff"></div><div class="a" style="left:15px;top:1px;width:6px;height:6px;background:#fff"></div><div class="a" style="left:22px;top:1px;width:6px;height:6px;background:#fff"></div><div class="a" style="left:29px;top:1px;width:6px;height:6px;background:#fff"></div><div class="a" style="left:36px;top:1px;width:6px;height:6px;background:#fff"></div><div class="a" style="left:43px;top:1px;width:6px;height:6px;background:#fff"></div><div class="a" style="left:50px;top:1px;width:6px;height:6px;background:#fff"></div><div class="a" style="left:1px;top:8px;width:6px;height:6px;background:#fff"></div><div class="a" style="left:8px;top:8px;width:6px;height:6px;background:#fff"></div><div class="a" style="left:15px;top:8px;width:6px;height:6px;background:#fff"></div><div class="a" style="left:22px;top:8px;width:6px;height:6px;background:#fff"></div><div class="a" style="left:29px;top:8px;width:6px;height:6px;background:#fff"></div><div class="a" style="left:36px;top:8px;width:6px;height:6px;background:#fff"></div><div class="a" style="left:43px;top:8px;width:6px;height:6px;background:#fff"></div><div class="a" style="left:50px;top:8px;width:6px;height:6px;background:#fff"></div><div class="a" style="left:1px;top:15px;width:6px;height:6px;background:#fff"></div><div class="a" style="left:8px;top:15px;width:6px;height:6px;background:#fff"></div><div class="a" style="left:15px;top:15px;width:6px;height:6px;background:#fff"></div><div class="a" style="left:22px;top:15px;width:6px;height:6px;background:#bbb"></div><div class="a" style="left:29px;top:15px;width:6px;height:6px;background:#fff"></div><div class="a" style="left:36px;top:15px;width:6px;height:6px;background:#fff"></div><div class="a" style="left:43px;top:15px;width:6px;height:6px;background:#fff"></div><div class="a" style="left:50px;top:15px;width:6px;height:6px;background:#fff"></div></div><div class="a td" style="left:443px;top:604px">19:12:43</div><div class="a td" style="left:538px;top:604px">ET SCAN Potential VNC Scan 5800-5820</div><div class="a td" style="left:829.5px;top:604px">2002910</div><div class="a td" style="left:934.5px;top:604px">6</div><div class="a td" style="left:999.7px;top:604px;font-weight:bold">2.083%</div><div class="a badge" style="left:203px;top:634px">2</div><div class="a pbar" style="left:258px;top:635px;background:#ffa500"></div><div class="a td" style="left:278px;top:640px;color:#3c3cff">1</div><div class="a td" style="left:323px;top:640px;color:#ff3c3c">1</div><div class="a" style="left:368px;top:635px;width:57px;height:22px;background:#e6e6e6"><div class="a" style="left:1px;top:1px;width:6px;height:6px;background:#fff"></div><div class="a" style="left:8px;top:1px;width:6px;height:6px;background:#fff"></div><div class="a" style="left:15px;top:1px;width:6px;height:6px;background:#fff"></div><div class="a" style="left:22px;top:1px;width:6px;height:6px;background:#fff"></div><div class="a" style="left:29px;top:1px;width:6px;height:6px;background:#fff"></div><div class="a" style="left:36px;top:1px;width:6px;height:6px;background:#fff"></div><div class="a" style="left:43px;top:1px;width:6px;height:6px;background:#fff"></div><div class="a" style="left:50px;top:1px;width:6px;height:6px;background:#fff"></div><div class="a" style="left:1px;top:8px;width:6px;height:6px;background:#fff"></div><div class="a" style="left:8px;top:8px;width:6px;height:6px;background:#fff"></div><div class="a" style="left:15px;top:8px;width:6px;height:6px;background:#fff"></div><div class="a" style="left:22px;top:8px;width:6px;height:6px;background:#fff"></div><div class="a" style="left:29px;top:8px;width:6px;height:6px;background:#fff"></div><div class="a" style="left:36px;top:8px;width:6px;height:6px;background:#fff"></div><div class="a" style="left:43px;top:8px;width:6px;height:6px;background:#fff"></div><div class="a" style="left:50px;top:8px;width:6px;height:6px;background:#fff"></div><div class="a" style="left:1px;top:15px;width:6px;height:6px;background:#fff"></div><div class="a" style="left:8px;top:15px;width:6px;height:6px;background:#fff"></div><div class="a" style="left:15px;top:15px;width:6px;height:6px;background:#fff"></div><div class="a" style="left:22px;top:15px;width:6px;height:6px;background:#777"></div><div class="a" style="left:29px;top:15px;width:6px;height:6px;background:#fff"></div><div class="a" style="left:36px;top:15px;width:6px;height:6px;background:#fff"></div><div class="a" style="left:43px;top:15px;width:6px;height:6px;background:#fff"></div><div class="a" style="left:50px;top:15px;width:6px;height:6px;background:#fff"></div></div><div class="a td" style="left:443px;top:640px">19:12:43</div><div class="a td" style="left:538px;top:640px">ET POLICY Suspicious inbound to PostgreSQL port 5432</div><div class="a td" style="left:829.5px;top:640px">2010939</div><div class="a td" style="left:934.5px;top:640px">6</div><div class="a td" style="left:999.7px;top:640px;font-weight:bold">4.167%</div><div class="a badge" style="left:203px;top:670px">1</div><div class="a pbar" style="left:258px;top:671px;background:#ffa500"></div><div class="a td" style="left:278px;top:676px;color:#3c3cff">1</div><div class="a td" style="left:323px;top:676px;color:#ff3c3c">1</div><div class="a" style="left:368px;top:671px;width:57px;height:22px;background:#e6e6e6"><div class="a" style="left:1px;top:1px;width:6px;height:6px;background:#fff"></div><div class="a" style="left:8px;top:1px;width:6px;height:6px;background:#fff"></div><div class="a" style="left:15px;top:1px;width:6px;height:6px;background:#fff"></div><div class="a" style="left:22px;top:1px;width:6px;height:6px;background:#fff"></div><div class="a" style="left:29px;top:1px;width:6px;height:6px;background:#fff"></div><div class="a" style="left:36px;top:1px;width:6px;height:6px;background:#fff"></div><div class="a" style="left:43px;top:1px;width:6px;height:6px;background:#fff"></div><div class="a" style="left:50px;top:1px;width:6px;height:6px;background:#fff"></div><div class="a" style="left:1px;top:8px;width:6px;height:6px;background:#fff"></div><div class="a" style="left:8px;top:8px;width:6px;height:6px;background:#fff"></div><div class="a" style="left:15px;top:8px;width:6px;height:6px;background:#fff"></div><div class="a" style="left:22px;top:8px;width:6px;height:6px;background:#fff"></div><div class="a" style="left:29px;top:8px;width:6px;height:6px;background:#fff"></div><div class="a" style="left:36px;top:8px;width:6px;height:6px;background:#fff"></div><div class="a" style="left:43px;top:8px;width:6px;height:6px;background:#fff"></div><div class="a" style="left:50px;top:8px;width:6px;height:6px;background:#fff"></div><div class="a" style="left:1px;top:15px;width:6px;height:6px;background:#fff"></div><div class="a" style="left:8px;top:15px;width:6px;height:6px;background:#fff"></div><div class="a" style="left:15px;top:15px;width:6px;height:6px;background:#fff"></div><div class="a" style="left:22px;top:15px;width:6px;height:6px;background:#bbb"></div><div class="a" style="left:29px;top:15px;width:6px;height:6px;background:#fff"></div><div class="a" style="left:36px;top:15px;width:6px;height:6px;background:#fff"></div><div class="a" style="left:43px;top:15px;width:6px;height:6px;background:#fff"></div><div class="a" style="left:50px;top:15px;width:6px;height:6px;background:#fff"></div></div><div class="a td" style="left:443px;top:676px">19:12:42</div><div class="a td" style="left:538px;top:676px">ET SCAN Potential VNC Scan 5900-5920</div><div class="a td" style="left:829.5px;top:676px">2002911</div><div class="a td" style="left:934.5px;top:676px">6</div><div class="a td" style="left:999.7px;top:676px;font-weight:bold">2.083%</div><div class="a badge" style="left:203px;top:706px">2</div><div class="a pbar" style="left:258px;top:707px;background:#ffa500"></div><div class="a td" style="left:278px;top:712px;color:#3c3cff">1</div><div class="a td" style="left:323px;top:712px;color:#ff3c3c">1</div><div class="a" style="left:368px;top:707px;width:57px;height:22px;background:#e6e6e6"><div class="a" style="left:1px;top:1px;width:6px;height:6px;background:#fff"></div><div class="a" style="left:8px;top:1px;width:6px;height:6px;background:#fff"></div><div class="a" style="left:15px;top:1px;width:6px;height:6px;background:#fff"></div><div class="a" style="left:22px;top:1px;width:6px;height:6px;background:#fff"></div><div class="a" style="left:29px;top:1px;width:6px;height:6px;background:#fff"></div><div class="a" style="left:36px;top:1px;width:6px;height:6px;background:#fff"></div><div class="a" style="left:43px;top:1px;width:6px;height:6px;background:#fff"></div><div class="a" style="left:50px;top:1px;width:6px;height:6px;background:#fff"></div><div class="a" style="left:1px;top:8px;width:6px;height:6px;background:#fff"></div><div class="a" style="left:8px;top:8px;width:6px;height:6px;background:#fff"></div><div class="a" style="left:15px;top:8px;width:6px;height:6px;background:#fff"></div><div class="a" style="left:22px;top:8px;width:6px;height:6px;background:#fff"></div><div class="a" style="left:29px;top:8px;width:6px;height:6px;background:#fff"></div><div class="a" style="left:36px;top:8px;width:6px;height:6px;background:#fff"></div><div class="a" style="left:43px;top:8px;width:6px;height:6px;background:#fff"></div><div class="a" style="left:50px;top:8px;width:6px;height:6px;background:#fff"></div><div class="a" style="left:1px;top:15px;width:6px;height:6px;background:#fff"></div><div class="a" style="left:8px;top:15px;width:6px;height:6px;background:#fff"></div><div class="a" style="left:15px;top:15px;width:6px;height:6px;background:#fff"></div><div class="a" style="left:22px;top:15px;width:6px;height:6px;background:#777"></div><div class="a" style="left:29px;top:15px;width:6px;height:6px;background:#fff"></div><div class="a" style="left:36px;top:15px;width:6px;height:6px;background:#fff"></div><div class="a" style="left:43px;top:15px;width:6px;height:6px;background:#fff"></div><div class="a" style="left:50px;top:15px;width:6px;height:6px;background:#fff"></div></div><div class="a td" style="left:443px;top:712px">19:12:42</div><div class="a td" style="left:538px;top:712px">ET POLICY Suspicious inbound to mySQL port 3306</div><div class="a td" style="left:829.5px;top:712px">2010937</div><div class="a td" style="left:934.5px;top:712px">6</div><div class="a td" style="left:999.7px;top:712px;font-weight:bold">4.167%</div><div class="a badge" style="left:203px;top:742px">1</div><div class="a pbar" style="left:258px;top:743px;background:#ffa500"></div><div class="a td" style="left:278px;top:748px;color:#3c3cff">1</div><div class="a td" style="left:323px;top:748px;color:#ff3c3c">1</div><div class="a" style="left:368px;top:743px;width:57px;height:22px;background:#e6e6e6"><div class="a" style="left:1px;top:1px;width:6px;height:6px;background:#fff"></div><div class="a" style="left:8px;top:1px;width:6px;height:6px;background:#fff"></div><div class="a" style="left:15px;top:1px;width:6px;height:6px;background:#fff"></div><div class="a" style="left:22px;top:1px;width:6px;height:6px;background:#fff"></div><div class="a" style="left:29px;top:1px;width:6px;height:6px;background:#fff"></div><div class="a" style="left:36px;top:1px;width:6px;height:6px;background:#fff"></div><div class="a" style="left:43px;top:1px;width:6px;height:6px;background:#fff"></div><div class="a" style="left:50px;top:1px;width:6px;height:6px;background:#fff"></div><div class="a" style="left:1px;top:8px;width:6px;height:6px;background:#fff"></div><div class="a" style="left:8px;top:8px;width:6px;height:6px;background:#fff"></div><div class="a" style="left:15px;top:8px;width:6px;height:6px;background:#fff"></div><div class="a" style="left:22px;top:8px;width:6px;height:6px;background:#fff"></div><div class="a" style="left:29px;top:8px;width:6px;height:6px;background:#fff"></div><div class="a" style="left:36px;top:8px;width:6px;height:6px;background:#fff"></div><div class="a" style="left:43px;top:8px;width:6px;height:6px;background:#fff"></div><div class="a" style="left:50px;top:8px;width:6px;height:6px;background:#fff"></div><div class="a" style="left:1px;top:15px;width:6px;height:6px;background:#fff"></div><div class="a" style="left:8px;top:15px;width:6px;height:6px;background:#fff"></div><div class="a" style="left:15px;top:15px;width:6px;height:6px;background:#fff"></div><div class="a" style="left:22px;top:15px;width:6px;height:6px;background:#bbb"></div><div class="a" style="left:29px;top:15px;width:6px;height:6px;background:#fff"></div><div class="a" style="left:36px;top:15px;width:6px;height:6px;background:#fff"></div><div class="a" style="left:43px;top:15px;width:6px;height:6px;background:#fff"></div><div class="a" style="left:50px;top:15px;width:6px;height:6px;background:#fff"></div></div><div class="a td" style="left:443px;top:748px">19:07:48</div><div class="a td" style="left:538px;top:748px">GPL ATTACK_RESPONSE id check returned root</div><div class="a td" style="left:829.5px;top:748px">2100498</div><div class="a td" style="left:934.5px;top:748px">6</div><div class="a td" style="left:999.7px;top:748px;font-weight:bold">2.083%</div>
<!--MAINEND-->
</body></html>
